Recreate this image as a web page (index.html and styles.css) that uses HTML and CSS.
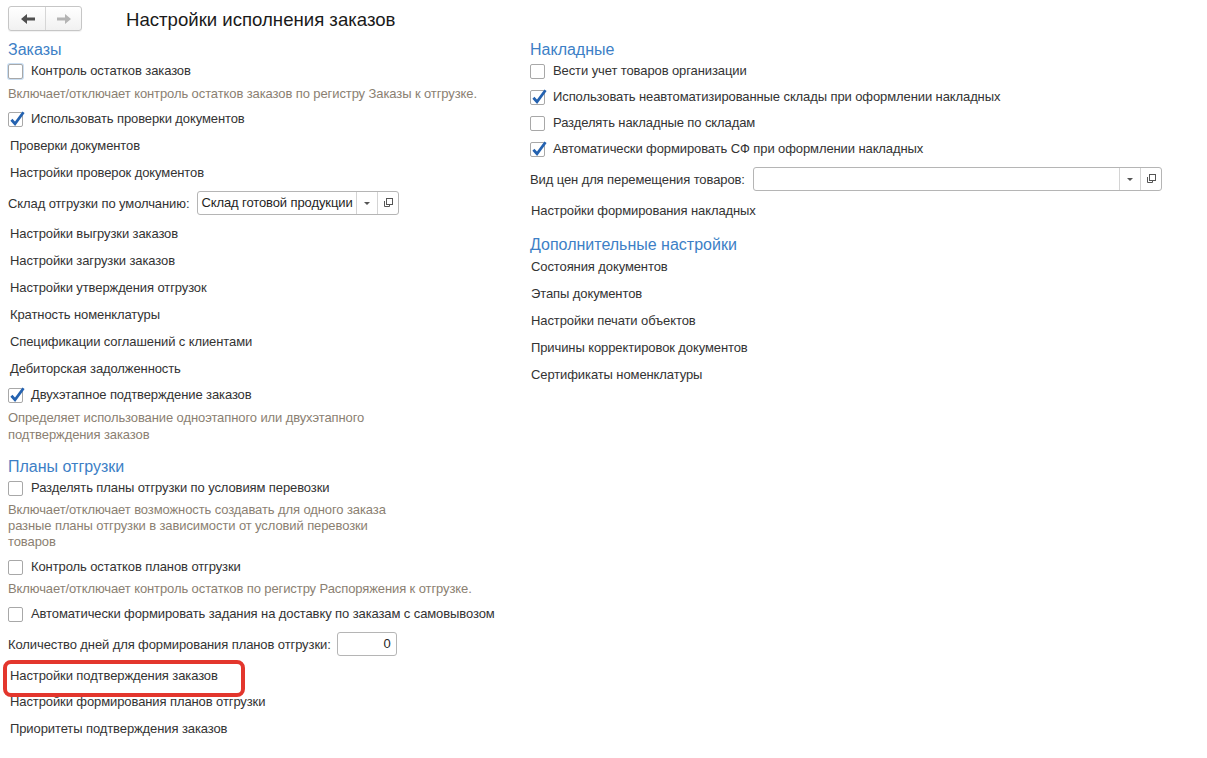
FILE: index.html
```html
<!DOCTYPE html>
<html lang="ru">
<head>
<meta charset="utf-8">
<title>Настройки исполнения заказов</title>
<link rel="stylesheet" href="styles.css">
</head>
<body>
<div class="page">
  <header class="topbar">
    <div class="nav">
      <button class="nav-btn back" type="button">
        <svg width="14" height="10" viewBox="0 0 14 10"><path d="M0 5 L6 0 V3.5 H14 V6.5 H6 V10 Z" fill="#4f4f4f"/></svg>
      </button>
      <button class="nav-btn fwd" type="button">
        <svg width="14" height="10" viewBox="0 0 14 10"><path d="M14 5 L8 0 V3.5 H0 V6.5 H8 V10 Z" fill="#b4b4b4"/></svg>
      </button>
    </div>
    <h1 class="title">Настройки исполнения заказов</h1>
  </header>

  <div class="columns">
    <div class="col col-left">
      <h2 class="heading">Заказы</h2>
      <label class="cb">
        <span class="cb-box focused"></span>
        <span class="cb-label">Контроль остатков заказов</span>
      </label>
      <p class="hint hint-first">Включает/отключает контроль остатков заказов по регистру Заказы к отгрузке.</p>
      <label class="cb">
        <span class="cb-box"><svg class="check" viewBox="0 0 16 16"><path d="M3.2 8.2 L6.6 12 L14.6 1.2"/></svg></span>
        <span class="cb-label">Использовать проверки документов</span>
      </label>
      <a class="link">Проверки документов</a>
      <a class="link">Настройки проверок документов</a>
      <div class="field-row">
        <span class="field-label wide-gap">Склад отгрузки по умолчанию:</span>
        <div class="combo combo-sklad">
          <span class="combo-value">Склад готовой продукции</span>
          <span class="combo-btn"><span class="tri"></span></span>
          <span class="combo-btn"><svg width="12" height="12" viewBox="0 0 12 12" class="open-ico"><rect x="4.5" y="1.5" width="6" height="6"/><path d="M2.5 4 V9.5 H7.5 V8"/></svg></span>
        </div>
      </div>
      <a class="link after-field first-after">Настройки выгрузки заказов</a>
      <a class="link">Настройки загрузки заказов</a>
      <a class="link">Настройки утверждения отгрузок</a>
      <a class="link">Кратность номенклатуры</a>
      <a class="link">Спецификации соглашений с клиентами</a>
      <a class="link">Дебиторская задолженность</a>
      <label class="cb">
        <span class="cb-box"><svg class="check" viewBox="0 0 16 16"><path d="M3.2 8.2 L6.6 12 L14.6 1.2"/></svg></span>
        <span class="cb-label">Двухэтапное подтверждение заказов</span>
      </label>
      <p class="hint hint-multi">Определяет использование одноэтапного или двухэтапного<br>подтверждения заказов</p>

      <h2 class="heading">Планы отгрузки</h2>
      <label class="cb">
        <span class="cb-box"></span>
        <span class="cb-label">Разделять планы отгрузки по условиям перевозки</span>
      </label>
      <p class="hint">Включает/отключает возможность создавать для одного заказа<br>разные планы отгрузки в зависимости от условий перевозки<br>товаров</p>
      <label class="cb">
        <span class="cb-box"></span>
        <span class="cb-label">Контроль остатков планов отгрузки</span>
      </label>
      <p class="hint">Включает/отключает контроль остатков по регистру Распоряжения к отгрузке.</p>
      <label class="cb">
        <span class="cb-box"></span>
        <span class="cb-label">Автоматически формировать задания на доставку по заказам с самовывозом</span>
      </label>
      <div class="field-row">
        <span class="field-label">Количество дней для формирования планов отгрузки:</span>
        <div class="num-field">0</div>
      </div>
      <a class="link after-field marked">Настройки подтверждения заказов</a>
      <a class="link tight">Настройки формирования планов отгрузки</a>
      <a class="link">Приоритеты подтверждения заказов</a>
    </div>

    <div class="col col-right">
      <h2 class="heading">Накладные</h2>
      <label class="cb">
        <span class="cb-box"></span>
        <span class="cb-label">Вести учет товаров организации</span>
      </label>
      <label class="cb">
        <span class="cb-box"><svg class="check" viewBox="0 0 16 16"><path d="M3.2 8.2 L6.6 12 L14.6 1.2"/></svg></span>
        <span class="cb-label">Использовать неавтоматизированные склады при оформлении накладных</span>
      </label>
      <label class="cb">
        <span class="cb-box"></span>
        <span class="cb-label">Разделять накладные по складам</span>
      </label>
      <label class="cb">
        <span class="cb-box"><svg class="check" viewBox="0 0 16 16"><path d="M3.2 8.2 L6.6 12 L14.6 1.2"/></svg></span>
        <span class="cb-label">Автоматически формировать СФ при оформлении накладных</span>
      </label>
      <div class="field-row">
        <span class="field-label wide-gap">Вид цен для перемещения товаров:</span>
        <div class="combo combo-price">
          <span class="combo-value"></span>
          <span class="combo-btn"><span class="tri"></span></span>
          <span class="combo-btn"><svg width="12" height="12" viewBox="0 0 12 12" class="open-ico"><rect x="4.5" y="1.5" width="6" height="6"/><path d="M2.5 4 V9.5 H7.5 V8"/></svg></span>
        </div>
      </div>
      <a class="link after-field">Настройки формирования накладных</a>

      <h2 class="heading">Дополнительные настройки</h2>
      <a class="link">Состояния документов</a>
      <a class="link">Этапы документов</a>
      <a class="link">Настройки печати объектов</a>
      <a class="link">Причины корректировок документов</a>
      <a class="link">Сертификаты номенклатуры</a>
    </div>
  </div>
</div>
</body>
</html>
```

FILE: styles.css
```css
* { box-sizing: border-box; }

html, body {
  margin: 0;
  padding: 0;
  background: #ffffff;
}

body {
  font-family: "Liberation Sans", Arial, sans-serif;
  font-size: 13px;
  letter-spacing: -0.1px;
  color: #333333;
}

.page {
  width: 1207px;
  min-height: 758px;
}

/* ---------- top bar ---------- */
.topbar {
  height: 40px;
  display: flex;
  align-items: flex-start;
  padding: 6px 0 0 8px;
}

.nav {
  display: flex;
  width: 74px;
  height: 25px;
  border: 1px solid #c6c6c6;
  border-radius: 3px;
  background: linear-gradient(#ffffff, #f1f1f1);
  box-shadow: 0 1px 1px rgba(0, 0, 0, 0.06);
}

.nav-btn {
  flex: 1;
  border: 0;
  background: transparent;
  padding: 0;
  display: flex;
  align-items: center;
  justify-content: center;
}

.nav-btn.back {
  flex: 0 0 37px;
  border-right: 1px solid #d6d6d6;
  padding-left: 2px;
}

.title {
  margin: 0 0 0 44px;
  font-size: 18.6px;
  letter-spacing: 0;
  font-weight: normal;
  line-height: 27px;
  color: #1a1a1a;
}

/* ---------- columns ---------- */
.columns {
  display: flex;
}

.col {
  display: flex;
  flex-direction: column;
  align-items: flex-start;
}

.col-left {
  width: 522px;
  margin-left: 8px;
}

.col-right {
  width: 640px;
}

.heading {
  margin: 14px 0 0 0;
  font-size: 16px;
  letter-spacing: 0;
  font-weight: normal;
  line-height: 20px;
  height: 20px;
  color: #3d7fc6;
}

.heading:first-child {
  margin-top: 0;
}

/* ---------- checkbox ---------- */
.cb {
  display: flex;
  align-items: center;
  height: 20px;
  margin-top: 6px;
  white-space: nowrap;
}

.heading + .cb {
  margin-top: 1px;
}

.hint + .cb {
  margin-top: 7px;
}

.cb-box {
  position: relative;
  width: 15px;
  height: 15px;
  border: 1px solid #a8a8a8;
  border-radius: 2px;
  background: #ffffff;
  flex: 0 0 15px;
}

.cb-box.focused {
  box-shadow: 0 0 0 1px #c9def3;
}

.check {
  position: absolute;
  left: -1px;
  top: -2px;
  width: 17px;
  height: 17px;
  overflow: visible;
}

.check path {
  fill: none;
  stroke: #2462b0;
  stroke-width: 2.6;
  stroke-linecap: butt;
  stroke-linejoin: miter;
}

.cb-label {
  margin-left: 8px;
  line-height: 20px;
}

/* ---------- hints ---------- */
.hint {
  margin: 4px 0 0 0;
  line-height: 16px;
  color: #8b7f72;
  white-space: nowrap;
}

.hint-first {
  margin-top: 5px;
}

.hint-multi {
  line-height: 17px;
}

/* ---------- links ---------- */
.link {
  display: block;
  height: 20px;
  line-height: 20px;
  margin-top: 7px;
  padding-left: 2px;
  color: #333333;
  white-space: nowrap;
  cursor: pointer;
}

.link.after-field {
  margin-top: 10px;
}

.link.first-after {
  margin-top: 9px;
}

.link.tight {
  margin-top: 6px;
}

.heading + .link {
  margin-top: 2px;
}

.col-right .link {
  padding-left: 1px;
}

.link.marked {
  position: relative;
}

.link.marked::after {
  content: "";
  position: absolute;
  left: -5px;
  top: -6px;
  width: 234px;
  height: 29px;
  border: 4px solid #e3362d;
  border-radius: 8px;
}

/* ---------- fields ---------- */
.field-row {
  display: flex;
  align-items: center;
  height: 24px;
  margin-top: 8px;
  white-space: nowrap;
}

.field-label {
  margin-right: 6px;
}

.field-label.wide-gap {
  margin-right: 8px;
}

.combo {
  display: flex;
  height: 24px;
  border: 1px solid #b5b5b5;
  border-radius: 3px;
  background: #ffffff;
}

.combo-sklad {
  width: 202px;
}

.combo-price {
  width: 409px;
}

.combo-value {
  flex: 1;
  padding-left: 3px;
  line-height: 22px;
  color: #1f1f1f;
  overflow: hidden;
}

.combo-btn {
  flex: 0 0 21px;
  border-left: 1px solid #d4d4d4;
  display: flex;
  align-items: center;
  justify-content: center;
}

.tri {
  width: 0;
  height: 0;
  border-left: 3px solid transparent;
  border-right: 3px solid transparent;
  border-top: 3px solid #555555;
}

.open-ico rect,
.open-ico path {
  fill: none;
  stroke: #555555;
  stroke-width: 1;
}

.num-field {
  width: 60px;
  height: 24px;
  border: 1px solid #b5b5b5;
  border-radius: 3px;
  text-align: right;
  padding-right: 5px;
  line-height: 22px;
  color: #1f1f1f;
}
```
